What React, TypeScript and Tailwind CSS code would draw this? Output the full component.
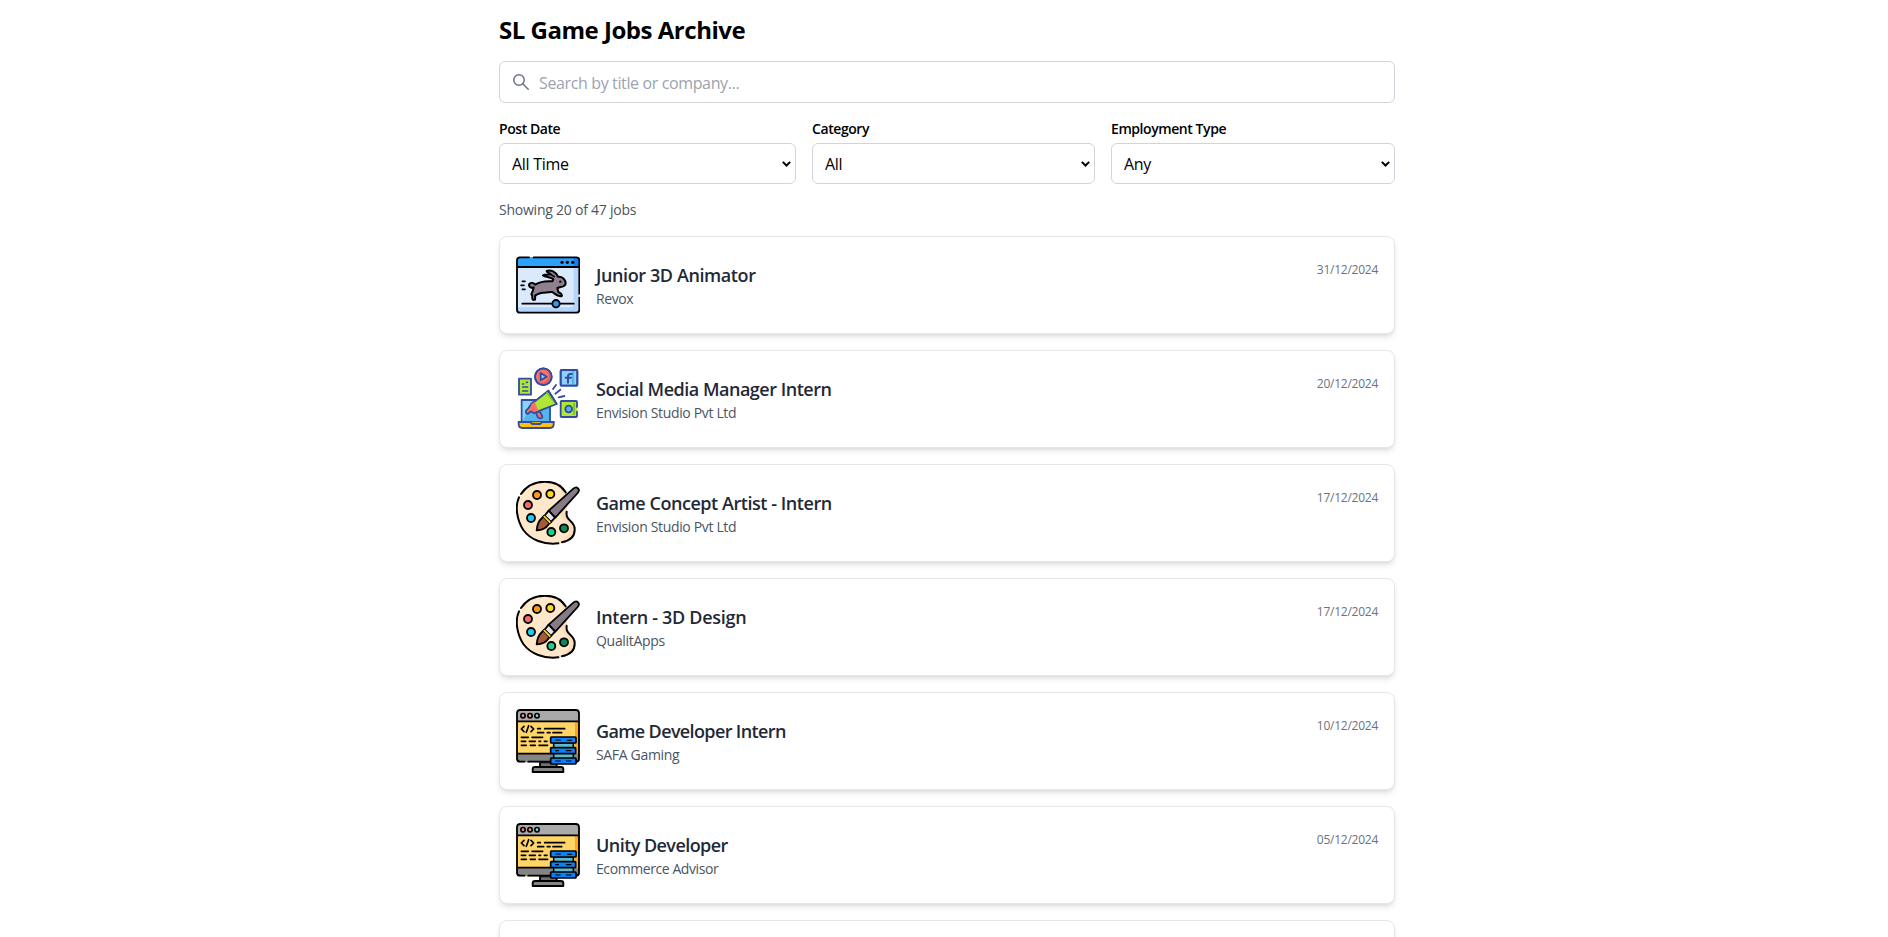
import { useState } from 'react';

function AnimatorIcon() {
  return (
    <svg viewBox="33 24 192 192" className="size-16 shrink-0" strokeLinecap="round" strokeLinejoin="round">
      <rect x="36" y="37" width="187" height="166" rx="9" fill="#b3d4fc" />
      <path d="M36 66H206V178q0 9-9 9H36Z" fill="#dbe9fd" />
      <path d="M36 66V46q0-9 9-9H214q9 0 9 9V66Z" fill="#2aa1fb" />
      <path d="M206 37h8q9 0 9 9V66H206Z" fill="#0a80fb" />
      <path d="M72 37H45q-9 0-9 9V194q0 9 9 9H214q9 0 9-9V158M223 146V46q0-9-9-9H86M36 66H223" fill="none" stroke="#000" strokeWidth="5.5" />
      <g fill="#000"><circle cx="171" cy="52" r="5" /><circle cx="187" cy="52" r="5" /><circle cx="203" cy="52" r="5" /></g>
      <path d="M86 127C76 131 69 122 74 116C79 111 87 115 91 119C103 111 119 107 142 109L145 102C135 96 122 96 114 91C120 87 130 89 137 88C132 84 126 83 125 78C137 73 153 80 159 95C171 94 179 101 182 113C183 121 175 126 167 126L157 129L160 141C168 145 173 149 170 154C161 155 148 146 142 141C133 140 124 145 112 143C102 144 98 149 91 151L90 164C84 167 80 163 82 153L79 147C83 142 84 136 86 127Z" fill="#8e808e" stroke="#000" strokeWidth="6" />
      <path d="M137 88 148 95" fill="none" stroke="#000" strokeWidth="5" />
      <circle cx="166" cy="110" r="3.5" fill="#000" />
      <path d="M52 109h8M48 121h9M52 133h8" stroke="#000" strokeWidth="5" />
      <path d="M52 176H206" stroke="#000" strokeWidth="5.5" />
      <circle cx="153" cy="176" r="11" fill="#2c9cf9" stroke="#000" strokeWidth="5.5" />
    </svg>
  );
}

function MarketingIcon() {
  return (
    <svg viewBox="33 27 192 192" className="size-16 shrink-0" strokeLinecap="round" strokeLinejoin="round">
      <g stroke="#344ca0" strokeWidth="5.5">
        <rect x="50" y="126" width="85" height="68" fill="#54b5ee" />
        <path d="M53 129H80L63 170 53 190Z" fill="#8bd3fa" stroke="none" />
        <path d="M41 192H146V199q0 11-11 11H52q-11 0-11-11Z" fill="#ffc20a" />
        <path d="M41 192H75l7 6h23l7-6h34" fill="#f3a51c" />
        <rect x="42" y="62" width="36" height="48" fill="#b0e735" />
        <path d="M53 78h3M64 73h3M53 87h15M53 99h15" fill="none" strokeWidth="5" />
        <circle cx="115" cy="56" r="25" fill="#fb7168" />
        <path d="M98 73A24 24 0 0 0 131 40" fill="none" stroke="#e95a57" strokeWidth="6" />
        <circle cx="115" cy="56" r="25" fill="none" />
        <path d="M107 45V67L125 56Z" fill="#8bd3fa" />
        <rect x="167" y="36" width="50" height="47" rx="3" fill="#8bd3fa" />
        <path d="M204 36V83" stroke="#54b5ee" strokeWidth="7" />
        <rect x="167" y="36" width="50" height="47" rx="3" fill="none" />
        <path d="M200 48h-4q-7 0-7 8V74M182 59H198" fill="none" strokeWidth="6" />
        <path d="M216 147V132q0-3-3-3H170q-3 0-3 3V174q0 3 3 3H213q3 0 3-3V161" fill="#b0e735" />
        <path d="M207 138V168" stroke="#80c62d" strokeWidth="7" />
        <circle cx="191" cy="153" r="10" fill="#54b5ee" />
        <path d="M93 165 98 177Q103 183 110 180Q114 177 110 171L104 160Z" fill="#fb7168" />
        <path d="M78 139 90 132 102 157 87 166 77 160 70 167Q61 169 63 158L70 151Z" fill="#fb7168" />
        <path d="M78 139 130 98 155 138 97 161Z" fill="#b0e735" />
        <path d="M77 140 89 131 100 158 87 163Z" fill="#fb7168" stroke="none" />
        <path d="M126 105 151 136" stroke="#80c62d" strokeWidth="5" />
        <path d="M130 98 155 138" fill="none" />
        <path d="M144 93 153 81M151 107 166 95M161 118 178 114" fill="none" />
      </g>
    </svg>
  );
}

function PaletteIcon() {
  return (
    <svg viewBox="33 27 192 192" className="size-16 shrink-0" strokeLinecap="round" strokeLinejoin="round">
      <path d="M182 62C168 39 146 29 122 29C73 29 36 66 36 116C36 172 78 215 135 215C177 218 209 202 209 170C209 148 188 151 185 129C181 108 196 91 182 62Z" fill="#ffe8ca" />
      <path d="M158 43C178 62 177 75 168 101C160 126 172 141 184 150C198 163 197 184 181 198C171 208 151 213 135 215C179 218 209 202 209 170C209 148 188 151 185 129C181 108 196 91 182 62C176 52 168 46 158 43Z" fill="#f9ddba" />
      <path d="M48 66C64 42 91 29 120 29C149 29 170 41 182 61M42 76C29 103 36 145 55 174C77 204 117 219 160 214M171 211C194 206 210 193 209 171C209 150 191 148 186 134Q184 127 185 119" fill="none" stroke="#000" strokeWidth="6" />
      <g stroke="#000" strokeWidth="5.5">
        <circle cx="96" cy="69" r="12" fill="#ff9811" />
        <circle cx="136" cy="66" r="12" fill="#ffda13" />
        <circle cx="69" cy="99" r="12" fill="#f4676d" />
        <circle cx="78" cy="138" r="12" fill="#1dcdf7" />
        <circle cx="139" cy="180" r="12" fill="#19d18b" />
        <circle cx="177" cy="169" r="12" fill="#078c5b" />
        <path d="M131 116 205 50Q213 43 219 49Q225 55 218 63L151 137Z" fill="#857b87" />
        <path d="M131 116 150 137 137 151 118 132Z" fill="#e6e1e8" />
        <path d="M118 131 137 150 130 158Q120 173 95 175Q97 150 111 138Z" fill="#a55b3b" />
        <path d="M118 134 134 150" stroke="#000" strokeWidth="10" />
        <path d="M118 134 134 150" stroke="#ffd02a" strokeWidth="5.5" />
      </g>
    </svg>
  );
}

function DeveloperIcon() {
  return (
    <svg viewBox="33 27 192 192" className="size-16 shrink-0" strokeLinecap="round" strokeLinejoin="round">
      <path d="M105 187h50v16h-50Z" fill="#727272" stroke="#000" strokeWidth="5.5" />
      <path d="M90 201H168q7 0 7 7v8H83v-8q0-7 7-7Z" fill="#858585" stroke="#000" strokeWidth="5.5" />
      <path d="M36 64H222V162H36Z" fill="#ffd567" />
      <path d="M210 64h12v98H210Z" fill="#ffa414" />
      <path d="M36 64V40q0-10 10-10H212q10 0 10 10V64Z" fill="#aaa" />
      <path d="M36 161H222V177q0 10-10 10H46q-10 0-10-10Z" fill="#858585" />
      <path d="M58 185H46q-10 0-10-9V40q0-10 10-10H212q10 0 10 10V176q0 9-10 9M70 185H138M36 64H222M36 161H136" fill="none" stroke="#000" strokeWidth="5.5" />
      <g stroke="#000" strokeWidth="5"><circle cx="54" cy="47" r="6.5" fill="#fb8c89" /><circle cx="75" cy="47" r="6.5" fill="#fb9a82" /><circle cx="96" cy="47" r="6.5" fill="#72dce3" /></g>
      <path d="M57 79 49 87 57 95M78 79 86 87 78 95M71 77 64 97M98 86h8M119 86H179M98 98h18M127 98h8M144 98H170M49 112H70M81 112H113M49 124H62M73 124H91M102 124h5M118 124h8M49 136H64M76 136H91M102 136H128" fill="none" stroke="#000" strokeWidth="5" />
      <path d="M146 129h59v14h-59ZM146 160h59v16h-59Z" fill="#60bbc9" stroke="#000" strokeWidth="4.5" />
      <g fill="#0a80fb" stroke="#000" strokeWidth="5">
        <rect x="137" y="111" width="76" height="18" rx="2" />
        <rect x="137" y="143" width="75" height="18" rx="2" />
        <rect x="137" y="174" width="76" height="18" rx="2" />
      </g>
      <path d="M152 120h14M188 121h11M152 152h8M184 152h14M152 183h14M184 183h14" stroke="#000" strokeWidth="3.5" />
    </svg>
  );
}

const jobs = [
  { title: 'Junior 3D Animator', company: 'Revox', date: '31/12/2024', Icon: AnimatorIcon, titleClass: 'tracking-[-0.4px]', companyClass: 'tracking-[-0.4px]' },
  { title: 'Social Media Manager Intern', company: 'Envision Studio Pvt Ltd', date: '20/12/2024', Icon: MarketingIcon, titleClass: 'tracking-[-0.49px]', companyClass: 'tracking-[-0.34px]' },
  { title: 'Game Concept Artist - Intern', company: 'Envision Studio Pvt Ltd', date: '17/12/2024', Icon: PaletteIcon, titleClass: 'tracking-[-0.45px]', companyClass: 'tracking-[-0.34px]' },
  { title: 'Intern - 3D Design', company: 'QualitApps', date: '17/12/2024', Icon: PaletteIcon, titleClass: 'tracking-[-0.3px]', companyClass: 'tracking-[-0.3px]' },
  { title: 'Game Developer Intern', company: 'SAFA Gaming', date: '10/12/2024', Icon: DeveloperIcon, titleClass: 'tracking-[-0.63px]', companyClass: 'tracking-[-0.33px]' },
  { title: 'Unity Developer', company: 'Ecommerce Advisor', date: '05/12/2024', Icon: DeveloperIcon, titleClass: 'tracking-[-0.56px]', companyClass: 'tracking-[-0.42px]' },
  { title: '', company: '', date: '', Icon: DeveloperIcon, titleClass: '', companyClass: '' },
];

const filters = [
  { label: 'Post Date', value: 'All Time' },
  { label: 'Category', value: 'All' },
  { label: 'Employment Type', value: 'Any' },
];

export default function App() {
  const [query, setQuery] = useState('');
  return (
    <div className="h-screen overflow-hidden bg-white pl-[6px] font-['Open_Sans','Noto_Sans',sans-serif] text-black">
      <main className="mx-auto flex w-[896px] flex-col pt-[14px]">
        <h1 className="text-2xl font-bold tracking-[-0.48px]">SL Game Jobs Archive</h1>
        <div className="mt-[15px] flex h-[42px] items-center rounded-md border border-[#d1d5db] px-[13px]">
          <svg viewBox="0 0 16 16" className="size-4 shrink-0" fill="none" stroke="#6b7280" strokeWidth="1.5" strokeLinecap="round">
            <circle cx="6" cy="6" r="5.2" />
            <path d="m10 10 5.2 5.2" />
          </svg>
          <input
            value={query}
            onChange={(e) => setQuery(e.target.value)}
            placeholder="Search by title or company..."
            className="ml-[10px] flex-1 pt-px tracking-[-0.37px] outline-none placeholder:text-[#9ca3af]"
          />
        </div>
        <div className="mt-4 grid grid-cols-[297px_283px_284px] gap-4">
          {filters.map((f) => (
            <div key={f.label} className="flex flex-col gap-1">
              <label className="text-sm font-semibold tracking-[-0.43px]">{f.label}</label>
              <div className="flex h-[41px] items-center rounded-md border border-[#d1d5db] bg-white pr-1">
                <select className="flex-1 appearance-none pt-px pl-3 tracking-[-0.3px] outline-none">
                  <option>{f.value}</option>
                </select>
                <svg viewBox="0 0 9 6" className="h-1.5 w-[9px] shrink-0" fill="none" stroke="#000" strokeWidth="2">
                  <path d="M0.8 0.9 4.5 4.5 8.2 0.9" />
                </svg>
              </div>
            </div>
          ))}
        </div>
        <p className="mt-4 text-sm tracking-[-0.23px] text-[#4b5563]">Showing 20 of 47 jobs</p>
        <div className="mt-4 flex flex-col gap-4">
          {jobs.map(({ title, company, date, Icon, titleClass, companyClass }, i) => (
            <article key={i} className="flex h-[98px] items-center gap-4 rounded-lg border border-[#e5e7eb] bg-white p-4 shadow-md">
              <Icon />
              <div className="flex flex-1 items-start justify-between">
                <div>
                  <h2 className={`text-lg/7 font-semibold text-[#1f2937] ${titleClass}`}>{title}</h2>
                  <p className={`text-sm text-[#4b5563] ${companyClass}`}>{company}</p>
                </div>
                <span className="pt-px text-xs tracking-[-0.25px] text-[#6b7280]">{date}</span>
              </div>
            </article>
          ))}
        </div>
      </main>
    </div>
  );
}
